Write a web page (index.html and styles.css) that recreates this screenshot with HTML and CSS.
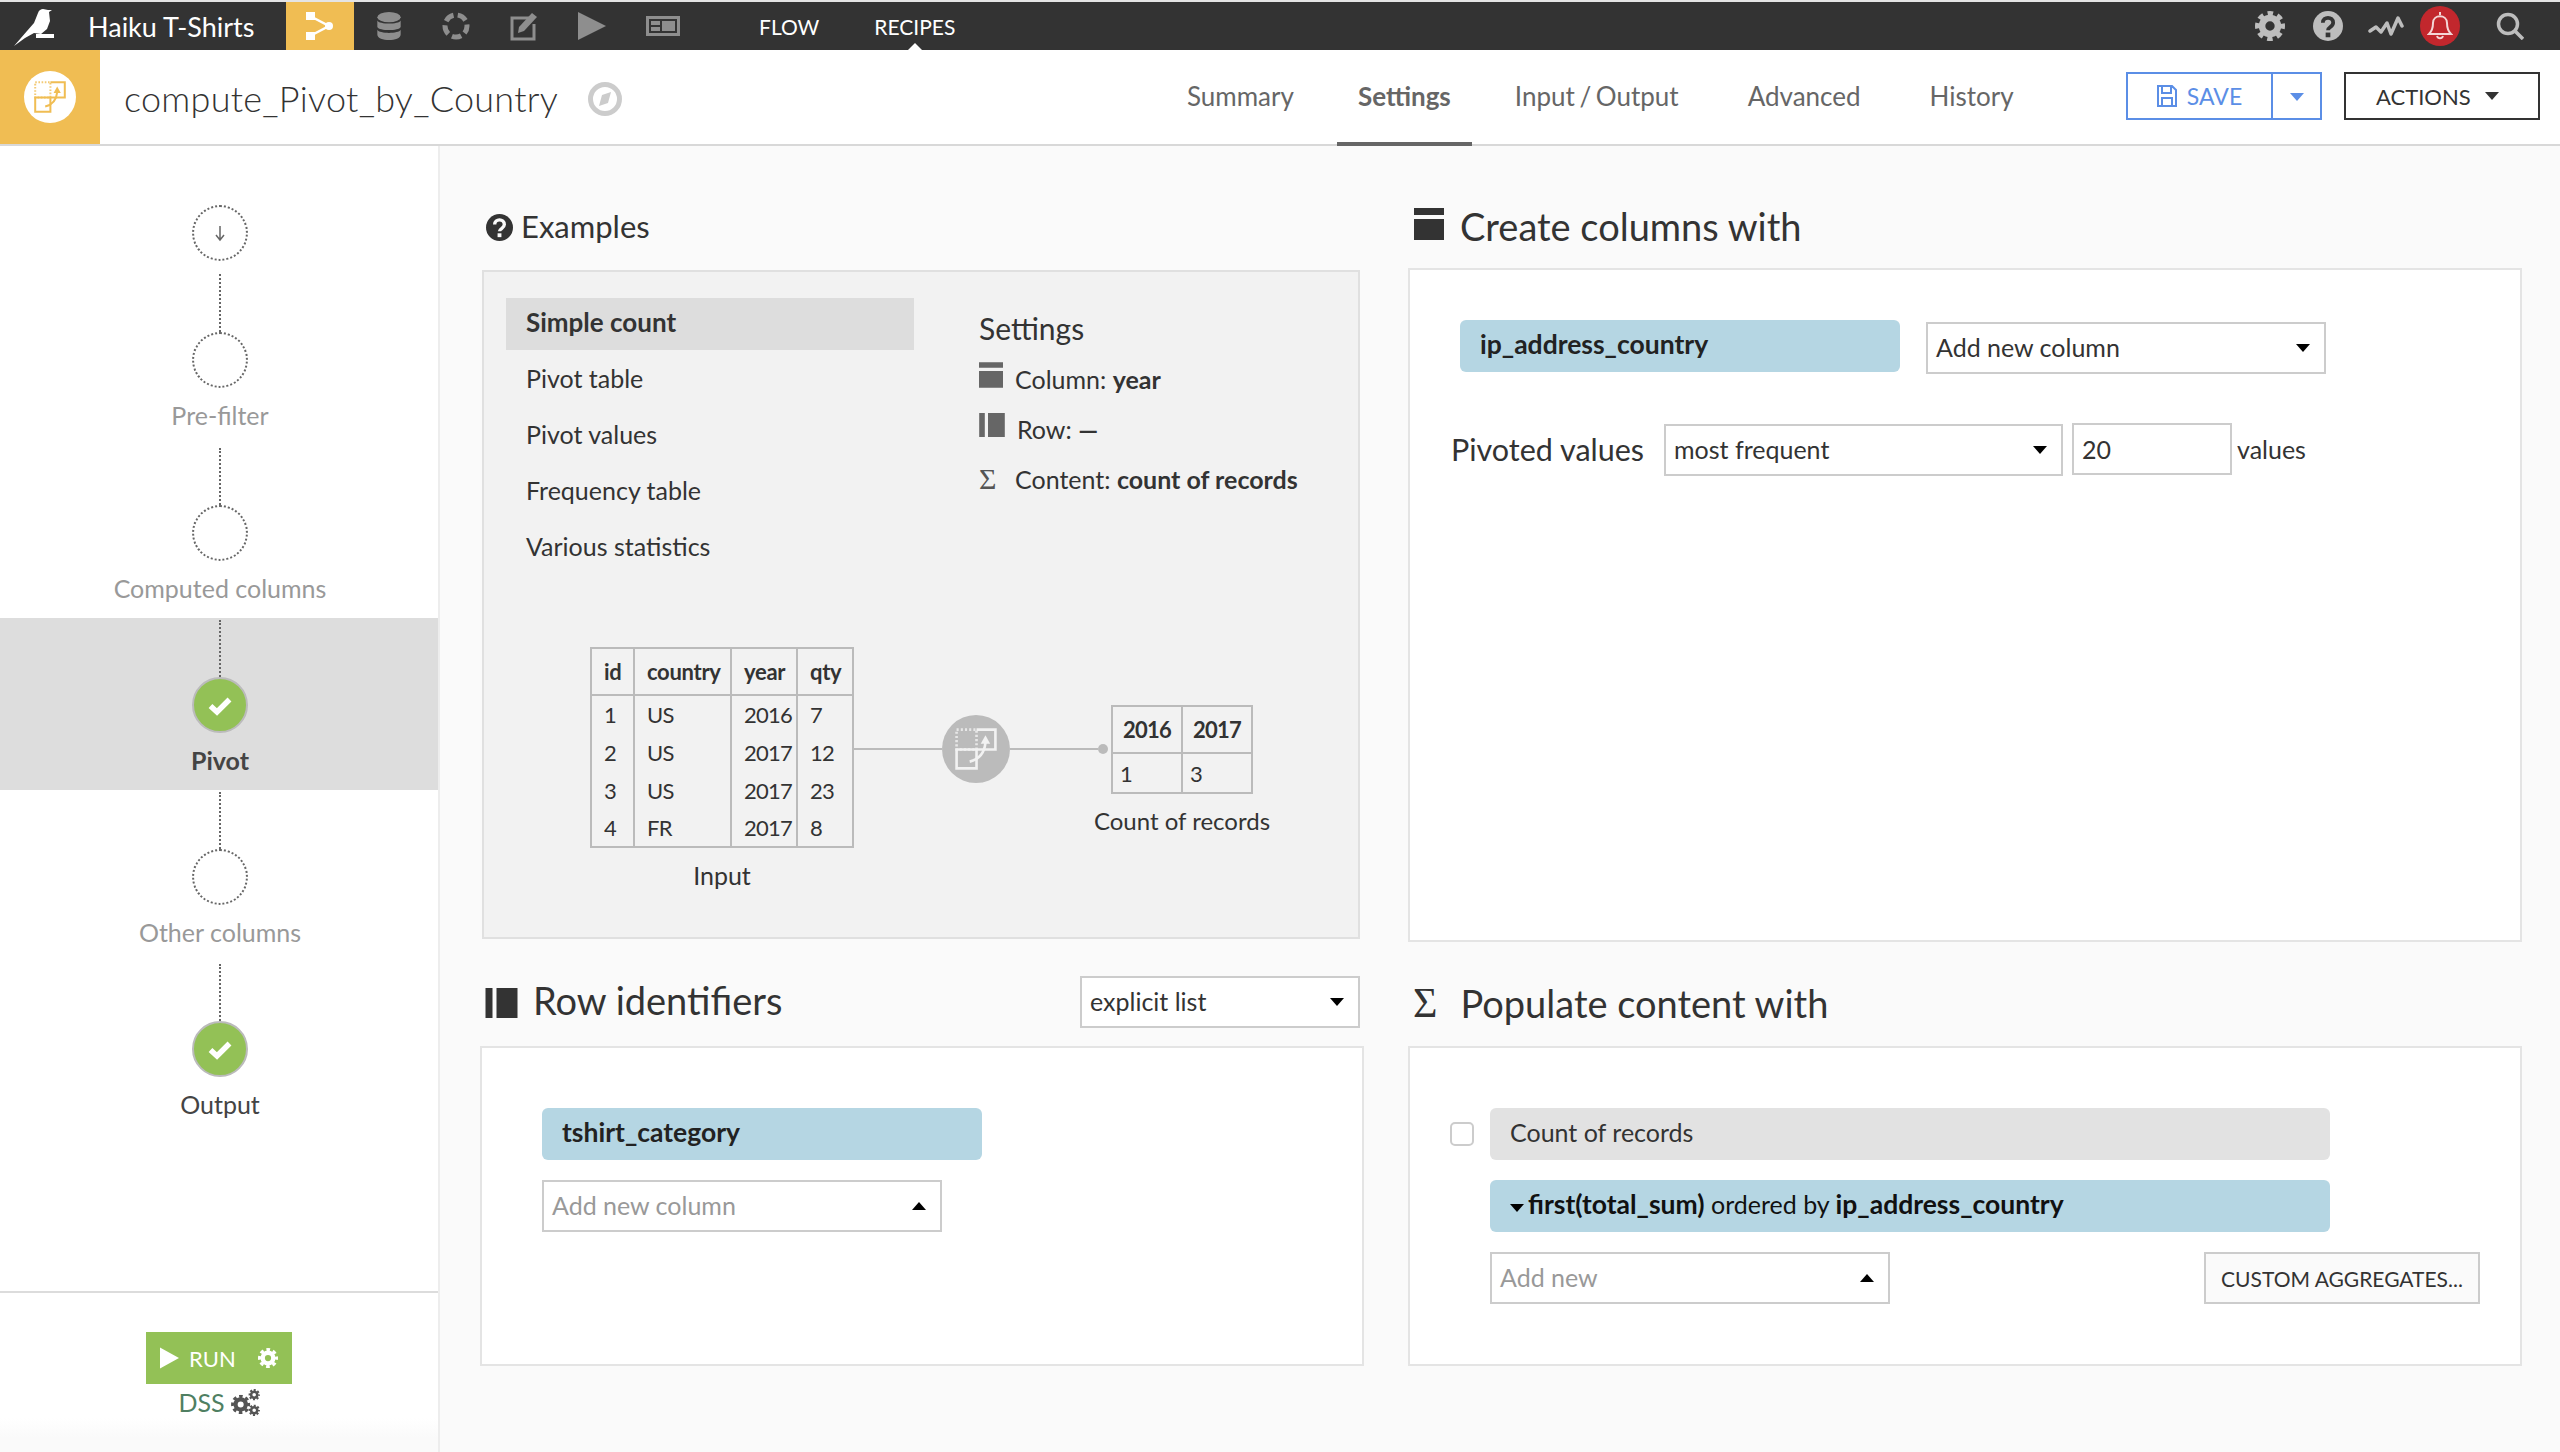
FILE: index.html
```html
<!DOCTYPE html>
<html lang="en">

<head>
    <meta charset="UTF-8">
    <title>compute_Pivot_by_Country</title>
    <link rel="stylesheet" href="styles.css">
</head>

<body>
    <svg class="defs" width="0" height="0">
        <defs>
            <symbol id="gear" viewBox="0 0 32 32">
                <circle cx="16" cy="16" r="8.5" fill="none" stroke="currentColor" stroke-width="7" />
                <circle cx="16" cy="16" r="13" fill="none" stroke="currentColor" stroke-width="6" stroke-dasharray="5.6 4.6" stroke-dashoffset="2.8" />
            </symbol>
            <symbol id="check" viewBox="0 0 24 24">
                <path d="M2.5 13 L9 19 L21.5 6.5" fill="none" stroke="currentColor" stroke-width="5.5" />
            </symbol>
            <symbol id="pivot" viewBox="0 0 40 40">
                <path d="M1.500 1.500h19v19h-19z" fill="none" stroke="currentColor" stroke-width="2.500" stroke-dasharray="2 2" opacity=".8" />
                <path d="M20.500 1.500h18v19h-18M20.500 20.500h-19v18h19z" fill="none" stroke="currentColor" stroke-width="2.500" />
                <path d="M14 32 C23 30 28 24 29 14" fill="none" stroke="currentColor" stroke-width="2.500" />
                <path d="M29 7l4.500 8h-9z" fill="currentColor" />
            </symbol>
            <symbol id="col" viewBox="0 0 30 32">
                <path d="M0 0h30v7H0zM0 11h30v21H0z" fill="currentColor" />
            </symbol>
            <symbol id="row" viewBox="0 0 32 30">
                <path d="M0 0h7v30H0zM11 0h21v30H11z" fill="currentColor" />
            </symbol>
        </defs>
    </svg>

    <nav class="topbar">
        <svg class="logo" viewBox="0 2 60 48" width="60" height="48">
            <path d="M14 46 L27 31 L34 23 L38 13 C39 10 41 9 43 9 L48 10 L52 10 L49 12 L50 21 L47 29 L41 34 L34 33 L25 38z" fill="#fff" />
            <path d="M36 34h18v4H36z" fill="#fff" />
        </svg>
        <span class="project">Haiku T-Shirts</span>
        <a class="flow-tab">
            <svg viewBox="286 2 68 48" width="68" height="48" fill="#fff">
                <path d="M310 16l19 10-19 10" fill="none" stroke="#fff" stroke-width="2.500" />
                <path d="M306 12h9v8h-9zM306 32h9v8h-9z" />
                <circle cx="329" cy="26" r="4" />
            </svg>
        </a>
        <div class="top-icons">
            <svg viewBox="0 0 26 30" width="26" height="28" fill="#8e8e8e">
                <ellipse cx="13" cy="5.500" rx="12.500" ry="5.500" />
                <path d="M.5 9c2 4.500 23 4.500 25 0v7c-2 4.500-23 4.500-25 0zM.5 19c2 4.500 23 4.500 25 0v5c0 8-25 8-25 0z" />
            </svg>
            <svg viewBox="0 0 28 28" width="28" height="28" fill="none" stroke="#8e8e8e" stroke-width="5">
                <circle cx="14" cy="14" r="11" stroke-dasharray="9.500 4.320" stroke-dashoffset="2" />
            </svg>
            <svg viewBox="0 0 28 30" width="28" height="30" fill="none" stroke="#8e8e8e" stroke-width="3">
                <path d="M19 7H2v21h22V13" />
                <path d="M8 22l1-6L22 2l5 4-13 14z" fill="#8e8e8e" stroke="none" />
            </svg>
            <svg viewBox="0 0 28 28" width="28" height="28" fill="#8e8e8e">
                <path d="M0 0l28 14L0 28z" />
            </svg>
            <svg viewBox="0 0 34 20" width="34" height="20" fill="#8e8e8e">
                <path fill-rule="evenodd" d="M0 0h34v20H0zM3 3v14h28V3zM5 5h9v4H5zM5 11h9v4H5zM16 5h13v10H16z" />
            </svg>
        </div>
        <a class="top-link">FLOW</a>
        <a class="top-link current">RECIPES</a>
        <div class="top-right">
            <svg class="ic-gear" width="30" height="30"><use href="#gear" /></svg>
            <svg class="ic-help" viewBox="0 0 32 32" width="30" height="30">
                <circle cx="16" cy="16" r="16" fill="#bdbdbd" />
                <path d="M10.500 12.500c0-7 11-7 11 0 0 4.500-5.500 4.500-5.500 8" fill="none" stroke="#333" stroke-width="4" />
                <path d="M13.500 23h5v5h-5z" fill="#333" />
            </svg>
            <svg class="ic-pulse" viewBox="0 0 36 20" width="36" height="20" fill="none" stroke="#bdbdbd" stroke-width="3.500" stroke-linecap="round" stroke-linejoin="round">
                <path d="M2 15l6-4 5 5 6-9 4 11 7-16 4 8" />
            </svg>
            <span class="bell">
                <svg viewBox="0 0 26 30" width="26" height="30" fill="none" stroke="#f3d6d6" stroke-width="2">
                    <path d="M13 1v3M2 23c3-3 4-6 4-11 0-9 14-9 14 0 0 5 1 8 4 11zM10 25c1 3 5 3 6 0" />
                </svg>
            </span>
            <svg class="ic-search" viewBox="0 0 28 28" width="28" height="28" fill="none" stroke="#bdbdbd" stroke-width="3.500">
                <circle cx="12" cy="12" r="9.500" />
                <path d="M19 19l8 8" />
            </svg>
        </div>
    </nav>

    <header class="recipe-head">
        <div class="recipe-badge">
            <span class="badge-circle"><svg width="32" height="32" class="ic-pivot"><use href="#pivot" /></svg></span>
        </div>
        <h1>compute_Pivot_by_Country</h1>
        <svg class="compass" viewBox="0 0 34 34" width="34" height="34">
            <circle cx="17" cy="17" r="14.500" fill="none" stroke="#ccc" stroke-width="5" />
            <path d="M23 10l-3 11-9 3 3-11z" fill="#ccc" />
        </svg>
        <ul class="tabs">
            <li>Summary</li>
            <li class="active">Settings</li>
            <li class="wide-tab">Input / Output</li>
            <li class="wide-tab">Advanced</li>
            <li>History</li>
        </ul>
        <div class="save-group">
            <button class="save">
                <svg viewBox="0 0 20 22" width="20" height="22" fill="none" stroke="#5b8ee6" stroke-width="2">
                    <path d="M1 1h14l4 4v16H1zM5 1v7h9V1M5 21v-8h10v8" />
                </svg>
                SAVE
            </button>
            <button class="save-caret"><span class="caret-down blue"></span></button>
        </div>
        <button class="actions">ACTIONS <span class="caret-down dark"></span></button>
    </header>

    <div class="page">
        <aside class="sidebar">
            <div class="steps">
                <div class="step first">
                    <span class="dot">
                        <svg viewBox="0 0 14 20" width="14" height="20" fill="none" stroke="#666" stroke-width="1.500">
                            <path d="M7 3v13M3 12l4 5 4-5" />
                        </svg>
                    </span>
                </div>
                <div class="step"><span class="line short"></span><span class="dot"></span><span class="label">Pre-filter</span></div>
                <div class="step"><span class="line"></span><span class="dot"></span><span class="label">Computed columns</span></div>
                <div class="step active"><span class="line"></span><span class="dot done"><svg width="24" height="24"><use href="#check" /></svg></span><span class="label">Pivot</span></div>
                <div class="step"><span class="line"></span><span class="dot"></span><span class="label">Other columns</span></div>
                <div class="step ok"><span class="line"></span><span class="dot done"><svg width="24" height="24"><use href="#check" /></svg></span><span class="label">Output</span></div>
            </div>
            <div class="run-box">
                <button class="run">
                    <svg viewBox="0 0 20 22" width="19" height="22" fill="#fff"><path d="M0 0l20 11L0 22z" /></svg>
                    RUN
                    <svg class="run-gear" width="20" height="20"><use href="#gear" /></svg>
                </button>
                <div class="engine">DSS
                    <svg viewBox="0 0 30 28" width="29" height="27" class="ic-gears">
                        <use href="#gear" x="0" y="6" width="20" height="20" />
                        <use href="#gear" x="18" y="0" width="12" height="12" />
                        <use href="#gear" x="18" y="16" width="12" height="12" />
                    </svg>
                </div>
            </div>
        </aside>

        <main class="settings">
            <section>
                <div class="sec-head examples-head">
                    <svg viewBox="0 0 28 28" width="27" height="27">
                        <circle cx="14" cy="14" r="14" fill="#333" />
                        <path d="M9 11c0-6.500 10-6.500 10 0 0 4-5 4-5 7" fill="none" stroke="#fafafa" stroke-width="3.500" />
                        <path d="M12 20h4v4h-4z" fill="#fafafa" />
                    </svg>
                    <h2>Examples</h2>
                </div>
                <div class="examples">
                    <div class="ex-top">
                        <ul class="ex-list">
                            <li class="selected">Simple count</li>
                            <li>Pivot table</li>
                            <li>Pivot values</li>
                            <li>Frequency table</li>
                            <li>Various statistics</li>
                        </ul>
                        <div class="ex-settings">
                            <h3>Settings</h3>
                            <p><svg class="ic-sm" width="24" height="26"><use href="#col" /></svg>Column: <b>year</b></p>
                            <p><svg class="ic-sm" width="26" height="24"><use href="#row" /></svg>Row: <b>—</b></p>
                            <p><span class="sigma">Σ</span>Content: <b>count of records</b></p>
                        </div>
                    </div>
                    <div class="diagram">
                        <div class="d-table input-t">
                            <table>
                                <thead>
                                    <tr><th class="c-id">id</th><th class="c-country">country</th><th class="c-year">year</th><th class="c-qty">qty</th></tr>
                                </thead>
                                <tbody>
                                    <tr><td>1</td><td>US</td><td>2016</td><td>7</td></tr>
                                    <tr><td>2</td><td>US</td><td>2017</td><td>12</td></tr>
                                    <tr><td>3</td><td>US</td><td>2017</td><td>23</td></tr>
                                    <tr><td>4</td><td>FR</td><td>2017</td><td>8</td></tr>
                                </tbody>
                            </table>
                            <div class="caption">Input</div>
                        </div>
                        <span class="wire"></span>
                        <span class="d-circle"><svg width="42" height="42"><use href="#pivot" /></svg></span>
                        <span class="wire end"></span>
                        <div class="d-table output-t">
                            <table>
                                <thead>
                                    <tr><th>2016</th><th>2017</th></tr>
                                </thead>
                                <tbody>
                                    <tr><td>1</td><td>3</td></tr>
                                </tbody>
                            </table>
                            <div class="caption">Count of records</div>
                        </div>
                    </div>
                </div>
            </section>

            <section>
                <div class="sec-head">
                    <svg width="30" height="32"><use href="#col" /></svg>
                    <h2>Create columns with</h2>
                </div>
                <div class="panel tall">
                    <div class="col-row">
                        <div class="chip blue wide">ip_address_country</div>
                        <div class="select add-col">Add new column<span class="caret-down"></span></div>
                    </div>
                    <div class="values-row">
                        <span class="pv-label">Pivoted values</span>
                        <div class="select most">most frequent<span class="caret-down"></span></div>
                        <div class="num">20</div>
                        <span class="pv-suffix">values</span>
                    </div>
                </div>
            </section>

            <section>
                <div class="sec-head lower row-head">
                    <svg width="33" height="30"><use href="#row" /></svg>
                    <h2>Row identifiers</h2>
                    <div class="select explicit">explicit list<span class="caret-down"></span></div>
                </div>
                <div class="panel low row-panel">
                    <div class="chip blue wide">tshirt_category</div>
                    <div class="select muted add-col">Add new column<span class="caret-up"></span></div>
                </div>
            </section>

            <section>
                <div class="sec-head lower">
                    <span class="sigma big">Σ</span>
                    <h2>Populate content with</h2>
                </div>
                <div class="panel low content-panel">
                    <div class="count-row">
                        <span class="check"></span>
                        <div class="chip grey long">Count of records</div>
                    </div>
                    <div class="chip blue long agg"><span class="caret-down tiny"></span><b>first(total_sum)</b> ordered by <b>ip_address_country</b></div>
                    <div class="add-row">
                        <div class="select muted add-col">Add new<span class="caret-up"></span></div>
                        <button class="custom">CUSTOM AGGREGATES...</button>
                    </div>
                </div>
            </section>
        </main>
    </div>
</body>

</html>
```
FILE: styles.css
```css
* {
    box-sizing: border-box;
}

body {
    margin: 0;
    height: 1452px;
    overflow: hidden;
    font-family: "Lato", sans-serif;
    font-size: 25px;
    color: #333;
    background: #fafafa;
}

.defs {
    display: block;
    height: 0;
}

h1,
h2,
h3,
p,
ul {
    margin: 0;
    padding: 0;
    font-weight: 400;
}

ul {
    list-style: none;
}

button {
    font-family: inherit;
    cursor: pointer;
}

/* top bar */
.topbar {
    height: 50px;
    border-top: 2px solid #e4e4e4;
    background: #333;
    display: flex;
    align-items: center;
    color: #fff;
}

.project {
    margin-left: 28px;
    width: 198px;
    font-size: 27px;
}

.flow-tab {
    width: 68px;
    height: 48px;
    background: #f0bd53;
    display: flex;
}

.top-icons {
    display: flex;
    align-items: center;
    gap: 40px;
    margin-left: 22px;
    width: 383px;
}

.top-link {
    font-size: 21px;
    margin-right: 55px;
    position: relative;
}

.top-link.current::after {
    content: "";
    position: absolute;
    left: 50%;
    bottom: -12px;
    margin-left: -8px;
    border: 8px solid transparent;
    border-top: 0;
    border-bottom-color: #fff;
}

.top-right {
    margin-left: auto;
    display: flex;
    align-items: center;
    padding-right: 36px;
    color: #bdbdbd;
}

.ic-help {
    margin-left: 28px;
}

.ic-pulse {
    margin-left: 25px;
}

.bell {
    width: 40px;
    height: 40px;
    margin-left: 16px;
    border-radius: 50%;
    background: #c2272d;
    display: flex;
    align-items: center;
    justify-content: center;
}

.ic-search {
    margin-left: 36px;
}

/* recipe header */
.recipe-head {
    height: 96px;
    background: #fff;
    border-bottom: 2px solid #d8d8d8;
    display: flex;
    align-items: center;
    position: relative;
}

.recipe-badge {
    width: 100px;
    height: 94px;
    background: #f0bd53;
    display: flex;
    align-items: center;
    justify-content: center;
}

.badge-circle {
    width: 52px;
    height: 52px;
    border-radius: 50%;
    background: #fff;
    color: #f0bd53;
    display: flex;
    align-items: center;
    justify-content: center;
}

.recipe-head h1 {
    font-size: 36px;
    letter-spacing: .28px;
    margin-left: 24px;
    padding-top: 2px;
    width: 464px;
    font-weight: 300;
}

.compass {
    margin-top: 4px;
}

.tabs {
    display: flex;
    margin-left: 544px;
    height: 94px;
    align-items: center;
    color: #666;
    font-size: 26px;
    word-spacing: -2px;
}

.tabs li {
    padding: 0 21px;
    margin-right: 22px;
    height: 94px;
    line-height: 92px;
    position: relative;
}

.tabs li.wide-tab {
    margin-right: 27px;
}

.tabs li.active {
    font-weight: 700;
}

.tabs li.active::after {
    content: "";
    position: absolute;
    left: 0;
    right: 0;
    bottom: -2px;
    height: 4px;
    background: #666;
}

.save-group {
    position: absolute;
    left: 2126px;
    top: 22px;
    display: flex;
    height: 48px;
    border: 2px solid #5b8ee6;
    background: #fff;
}

.save {
    width: 145px;
    border: 0;
    border-right: 2px solid #5b8ee6;
    background: #fff;
    color: #5b8ee6;
    font-size: 23px;
    display: flex;
    align-items: center;
    justify-content: center;
    gap: 10px;
}

.save-caret {
    width: 47px;
    border: 0;
    background: #fff;
}

.actions {
    position: absolute;
    left: 2344px;
    top: 22px;
    width: 196px;
    height: 48px;
    border: 2px solid #333;
    background: #fff;
    color: #333;
    font-size: 22px;
    display: flex;
    align-items: center;
    padding: 0 0 0 30px;
    gap: 6px;
}

.caret-down,
.caret-up {
    display: inline-block;
    border-left: 7px solid transparent;
    border-right: 7px solid transparent;
}

.caret-down {
    border-top: 8px solid #000;
}

.caret-up {
    border-bottom: 8px solid #000;
}

.caret-down.blue {
    border-top-color: #5b8ee6;
}

.caret-down.dark {
    border-top-color: #333;
    margin-left: 8px;
}

.caret-down.tiny {
    margin-right: 4px;
    vertical-align: middle;
}

/* page */
.page {
    display: flex;
    height: 1306px;
}

.sidebar {
    width: 440px;
    flex: none;
    background: #fff;
    border-right: 2px solid #ededed;
    display: flex;
    flex-direction: column;
}

.steps {
    flex: 1;
    padding-top: 59px;
}

.step {
    height: 172px;
    padding-left: 2px;
    display: flex;
    flex-direction: column;
    align-items: center;
    color: #999;
}

.step.first {
    height: 69px;
}

.step .line {
    width: 0;
    height: 57px;
    margin-top: 2px;
    border-left: 2px dotted #666;
}

.step .line.short {
    height: 58px;
    margin-top: 0;
}

.dot {
    width: 56px;
    height: 56px;
    flex: none;
    border-radius: 50%;
    border: 2px dotted #666;
    display: flex;
    align-items: center;
    justify-content: center;
}

.dot.done {
    border: 2px solid #bbb;
    background: #93c156;
    color: #fff;
}

.label {
    margin-top: 10px;
    line-height: 34px;
}

.step.active {
    background: #ddd;
    color: #444;
    font-weight: 700;
}

.step.ok {
    color: #444;
}

.run-box {
    height: 161px;
    border-top: 2px solid #dcdcdc;
    display: flex;
    flex-direction: column;
    align-items: center;
    padding-top: 39px;
    background: linear-gradient(#fff 125px, #fafafa 145px);
}

.run {
    width: 146px;
    height: 52px;
    border: 0;
    background: #93c156;
    color: #fff;
    font-size: 22px;
    display: flex;
    align-items: center;
    padding: 0 14px;
    gap: 10px;
}

.run-gear {
    margin-left: auto;
}

.engine {
    display: flex;
    align-items: center;
    gap: 6px;
    color: #4f7f62;
    line-height: 36px;
}

.ic-gears {
    color: #555;
}

/* settings grid */
.settings {
    flex: 1;
    display: grid;
    grid-template-columns: 884px 1114px;
    grid-template-rows: 740px 390px;
    column-gap: 44px;
    row-gap: 34px;
    padding: 56px 0 0 40px;
}

.sec-head {
    height: 66px;
    display: flex;
    align-items: flex-start;
    color: #333;
    gap: 16px;
    padding: 6px 0 0 6px;
}

.sec-head h2 {
    font-size: 38px;
    line-height: 38px;
    margin-top: -1px;
}

.examples-head {
    gap: 8px;
    height: 68px;
}

.examples-head h2 {
    font-size: 31px;
}

.examples-head svg {
    margin-top: 6px;
}

.sec-head.lower {
    height: 70px;
    align-items: center;
    padding: 0 4px 16px 5px;
}

.row-head {
    gap: 15px;
}

.row-head h2 {
    margin-bottom: 5px;
}

.row-head .select {
    align-self: flex-start;
}

.examples {
    height: 669px;
    margin-right: 4px;
    margin-left: 2px;
    background: #f2f2f2;
    border: 2px solid #e0e0e0;
    padding: 26px 22px;
}

.ex-top {
    display: flex;
    height: 349px;
}

.ex-list {
    width: 408px;
}

.ex-list li {
    height: 52px;
    line-height: 48px;
    padding-left: 20px;
    margin-bottom: 4px;
}

.ex-list li.selected {
    background: #ddd;
    font-weight: 700;
    font-size: 26px;
}

.ex-settings {
    margin-left: 65px;
}

.ex-settings h3 {
    font-size: 30px;
    margin: 10px 0 6px;
    line-height: 40px;
}

.ex-settings p {
    height: 50px;
    display: flex;
    align-items: center;
    white-space: pre;
}

.ic-sm {
    color: #666;
    margin-right: 12px;
    margin-bottom: 8px;
}

.sigma {
    width: 36px;
    color: #555;
    font-family: "Liberation Serif", serif;
    font-size: 30px;
    line-height: 30px;
}

.sigma.big {
    width: auto;
    color: #333;
    font-size: 42px;
    line-height: 42px;
    margin-right: 7px;
}

/* the little pivot diagram */
.diagram {
    display: flex;
    align-items: flex-start;
    font-size: 22px;
    padding-left: 84px;
}

.d-table table {
    border-collapse: collapse;
    border: 2px solid #bbb;
    table-layout: fixed;
}

.input-t table {
    width: 262px;
}

.output-t table {
    width: 142px;
}

.c-id {
    width: 43px;
}

.c-country {
    width: 97px;
}

.c-year {
    width: 66px;
}

.c-qty {
    width: 56px;
}

.d-table th,
.d-table td {
    border-left: 2px solid #bbb;
    text-align: left;
    padding: 0 0 0 12px;
    height: 38px;
    font-size: 22px;
    letter-spacing: -.8px;
}

.d-table th {
    height: 47px;
    border-bottom: 2px solid #bbb;
    letter-spacing: -.3px;
}

.caption {
    text-align: center;
    font-size: 25px;
    margin-top: 12px;
}

.wire {
    width: 88px;
    height: 2px;
    background: #bbb;
    margin-top: 101px;
}

.wire.end {
    position: relative;
}

.wire.end::after {
    content: "";
    position: absolute;
    right: -10px;
    top: -4px;
    width: 10px;
    height: 10px;
    border-radius: 50%;
    background: #bbb;
}

.d-circle {
    width: 68px;
    height: 68px;
    margin-top: 68px;
    border-radius: 50%;
    background: #bbb;
    color: #f2f2f2;
    display: flex;
    align-items: center;
    justify-content: center;
}

.output-t {
    margin-left: 13px;
    margin-top: 58px;
}

.output-t th,
.output-t td {
    padding-left: 10px;
}

.output-t td {
    height: 40px;
    padding-left: 7px;
}

.output-t th {
    letter-spacing: -.8px;
}

.output-t .caption {
    font-size: 24px;
    margin: 12px -18px 0;
}

/* panels */
.panel {
    background: #fff;
    border: 2px solid #e4e4e4;
}

.panel.tall {
    height: 674px;
    padding: 50px 0 0 50px;
}

.panel.low {
    height: 320px;
}

.col-row {
    display: flex;
    align-items: flex-start;
    gap: 26px;
}

.chip {
    height: 52px;
    line-height: 48px;
    border-radius: 6px;
    padding-left: 20px;
}

.chip.blue {
    background: #b5d6e3;
    color: #222;
}

.chip.wide {
    width: 440px;
    font-weight: 700;
    font-size: 26.5px;
}

.chip.grey {
    background: #e2e2e2;
}

.chip.long {
    width: 840px;
}

.chip.agg {
    color: #111;
    margin-top: 20px;
}

.chip.agg b {
    font-size: 26.5px;
}

.select {
    height: 52px;
    border: 2px solid #ccc;
    background: #fff;
    display: flex;
    align-items: center;
    justify-content: space-between;
    padding: 0 14px 3px 8px;
    color: #333;
}

.select span {
    margin-top: 3px;
}

.select.add-col {
    width: 400px;
}

.col-row .select {
    margin-top: 2px;
}

.select.muted {
    color: #999;
}

.values-row {
    display: flex;
    align-items: center;
    margin-top: 50px;
    margin-left: -9px;
}

.pv-label {
    font-size: 30.5px;
    width: 213px;
    margin-bottom: 2px;
}

.select.most {
    width: 399px;
}

.num {
    width: 160px;
    height: 52px;
    margin-left: 9px;
    margin-top: -2px;
    border: 2px solid #ccc;
    line-height: 48px;
    padding-left: 8px;
}

.pv-suffix {
    margin-left: 5px;
    margin-bottom: 2px;
}

.select.explicit {
    width: 280px;
    margin-left: auto;
}

.row-panel {
    padding: 60px 0 0 60px;
}

.row-panel .select {
    margin-top: 20px;
}

.content-panel {
    padding: 60px 0 0 80px;
}

.count-row {
    position: relative;
}

.check {
    position: absolute;
    left: -40px;
    top: 14px;
    width: 24px;
    height: 24px;
    border: 2px solid #ccc;
    border-radius: 5px;
    background: #fff;
}

.add-row {
    display: flex;
    justify-content: space-between;
    margin-top: 20px;
    width: 990px;
}

.custom {
    width: 276px;
    height: 52px;
    border: 2px solid #ccc;
    background: #fafafa;
    color: #333;
    font-size: 21px;
    padding: 0;
}
```
